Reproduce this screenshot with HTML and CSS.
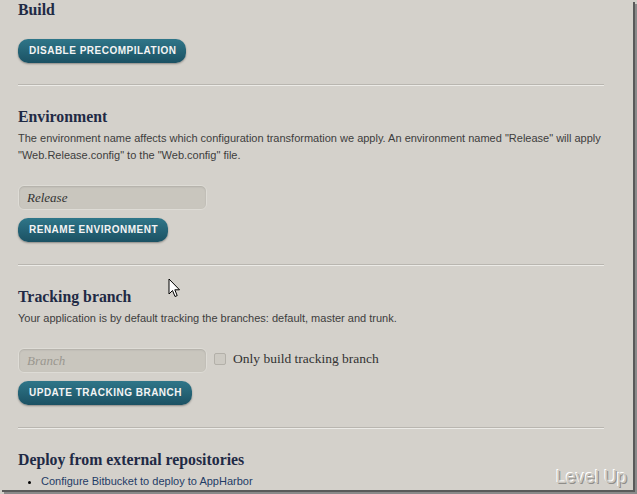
FILE: index.html
```html
<!DOCTYPE html>
<html>
<head>
<meta charset="utf-8">
<link rel="stylesheet" href="styles.css">
</head>
<body>
<div class="frame">
  <main class="content">
    <section class="section first">
      <h2 class="title">Build</h2>
      <div class="actions"><button class="btn">DISABLE PRECOMPILATION</button></div>
    </section>
    <section class="section">
      <h2 class="title">Environment</h2>
      <p class="desc">The environment name affects which configuration transformation we apply. An environment named "Release" will apply "Web.Release.config" to the "Web.config" file.</p>
      <div class="field"><input class="input" type="text" value="Release"></div>
      <div class="actions tight"><button class="btn">RENAME ENVIRONMENT</button></div>
    </section>
    <section class="section">
      <h2 class="title">Tracking branch</h2>
      <p class="desc">Your application is by default tracking the branches: default, master and trunk.</p>
      <div class="field row">
        <input class="input" type="text" placeholder="Branch">
        <label class="check"><span class="box"></span>Only build tracking branch</label>
      </div>
      <div class="actions tight"><button class="btn">UPDATE TRACKING BRANCH</button></div>
    </section>
    <section class="section last">
      <h2 class="title">Deploy from external repositories</h2>
      <ul class="links">
        <li><a href="#">Configure Bitbucket to deploy to AppHarbor</a></li>
      </ul>
    </section>
  </main>
  <div class="watermark">Level Up</div>
  <svg class="cursor" width="13" height="20" viewBox="0 0 13 20"><path d="M1 1 L1 16 L4.5 12.5 L7 18.5 L9.2 17.6 L6.8 11.8 L11.5 11.8 Z" fill="#fff" stroke="#000" stroke-width="1"/></svg>
</div>
</body>
</html>
```
FILE: styles.css
```css
html, body {
  margin: 0;
  padding: 0;
}
body {
  background: #d3d0ca;
  width: 637px;
  height: 494px;
  overflow: hidden;
}
.frame {
  position: relative;
  width: 633px;
  height: 490px;
  background: #d4d1cb;
  box-shadow: 2px 2px 0 #5a5a5a, 4px 4px 0 #8a8a8a;
  overflow: hidden;
}
.content {
  padding: 0 29px 0 18px;
}
.section {
  border-bottom: 1px solid #b9b6b0;
  box-shadow: 0 1px 0 #ecebe7;
  padding: 22px 0 22px;
}
.section.first {
  padding-top: 0;
  padding-bottom: 21px;
}
.section.last {
  border-bottom: none;
  box-shadow: none;
}
.title {
  margin: 0;
  font-family: "Liberation Serif", serif;
  font-weight: bold;
  font-size: 15.8px;
  line-height: 20px;
  color: #1f2a45;
}
.desc {
  margin: 3px 0 0;
  font-family: "Liberation Sans", Arial, sans-serif;
  font-size: 11px;
  line-height: 17px;
  color: #3d3d3d;
}
.actions {
  margin-top: 19px;
}
.actions.tight {
  margin-top: 8px;
}
.btn {
  display: inline-block;
  height: 24px;
  padding: 0 10px 0 11px;
  border: none;
  border-radius: 10px;
  background: linear-gradient(#2f7689, #1b5163);
  box-shadow: 0 1px 2px rgba(0,0,0,0.35);
  color: #f4f4f4;
  font-family: "Liberation Sans", Arial, sans-serif;
  font-weight: bold;
  font-size: 10px;
  letter-spacing: 0.5px;
  line-height: 24px;
}
.field {
  margin-top: 21px;
}
.row {
  display: flex;
  align-items: center;
  gap: 7px;
}
.input {
  box-sizing: border-box;
  width: 189px;
  height: 25px;
  margin: 0;
  padding: 0 8px;
  border: 1px solid #dedcd6;
  border-radius: 6px;
  background: #c9c6be;
  box-shadow: inset 0 1px 2px rgba(0,0,0,0.12);
  font-family: "Liberation Serif", serif;
  font-style: italic;
  font-size: 13px;
  color: #333;
  outline: none;
}
.input::placeholder {
  color: #9a978f;
}
.check {
  display: flex;
  align-items: center;
  gap: 7px;
  font-family: "Liberation Serif", serif;
  font-size: 13.5px;
  color: #333;
  margin-top: -4px;
}
.box {
  width: 10px;
  height: 10px;
  border: 1px solid #b3b0a9;
  border-radius: 2px;
  background: #cdcac3;
}
.links {
  margin: 3px 0 0;
  padding-left: 23px;
  font-family: "Liberation Sans", Arial, sans-serif;
  font-size: 11px;
  line-height: 17px;
}
.links a {
  color: #1f3c66;
  text-decoration: none;
}
.watermark {
  position: absolute;
  right: 6px;
  bottom: 2px;
  font-family: "Liberation Sans", Arial, sans-serif;
  font-size: 18px;
  color: #c9c6c0;
  text-shadow: -1px -1px 0 #fff, 1px 1px 0 #8f8d89;
}
.cursor {
  position: absolute;
  left: 168px;
  top: 278px;
}
```
